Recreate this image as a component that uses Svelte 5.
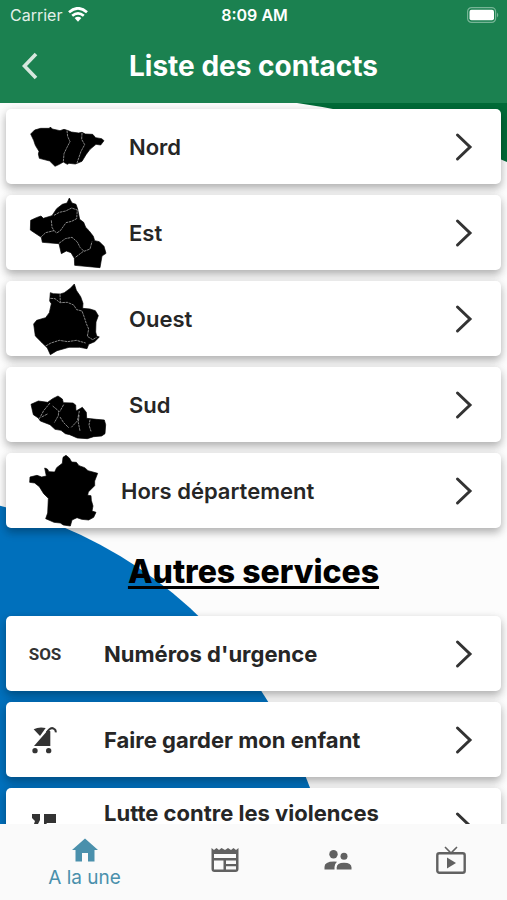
<script>
  const regions = [
    {
      name: 'Nord', box: '75 12 252 225',
      shape: 'M92 87 L104 75 L122 70 L148 70 L151 66 L157 72 L180 77 L192 73 L202 76 L214 81 L236 84 L246 82 L256 87 L278 88 L287 98 L305 101 L312 107 L302 120 L288 118 L270 133 L258 149 L246 169 L226 177 L207 175 L202 178 L190 171 L178 178 L165 184 L149 168 L118 160 L115 147 L117 139 L106 121 L101 106 Z',
      lines: 'M201 77 L203 94 L210 110 L201 127 L192 146 L190 170 M246 84 L245 103 L254 119 L243 139 L231 174'
    },
    {
      name: 'Est', box: '75 15 252 225',
      shape: 'M208 24 L216 39 L228 43 L233 57 L239 88 L251 97 L257 112 L267 122 L280 139 L284 152 L298 155 L312 169 L318 190 L306 198 L300 233 L224 226 L223 205 L213 188 L199 183 L184 191 L177 161 L127 157 L124 142 L103 128 L91 120 L92 91 L109 83 L123 78 L130 85 L156 77 L170 56 L187 43 L201 39 Z',
      lines: 'M154 91 L156 112 L162 122 L137 128 L124 140 M162 76 L178 67 L197 63 L215 54 L232 60 L230 86 L215 94 L198 98 L181 122 L170 129 L161 121 M177 160 L196 146 L216 142 L232 156 L240 172 L252 184 L270 177 L276 155 M250 184 L225 203'
    },
    {
      name: 'Ouest', box: '75 9 252 225',
      shape: 'M223 18 L229 37 L242 56 L249 76 L248 91 L270 93 L286 98 L295 113 L288 132 L287 162 L290 174 L298 177 L284 191 L266 199 L261 212 L239 208 L207 208 L171 218 L151 230 L142 210 L126 194 L106 174 L101 138 L110 127 L137 119 L148 104 L154 77 L149 69 L151 44 L160 47 L181 48 L193 44 L211 31 Z',
      lines: 'M151 61 L165 62 L180 74 L202 73 L221 81 L230 95 L246 99 L253 118 L259 137 L266 153 L262 175 L278 185 L290 178 M137 204 L153 195 L178 187 L203 191 L229 187 L257 195 M180 49 L181 72'
    },
    {
      name: 'Sud', box: '75 7 252 225',
      shape: 'M93 119 L115 109 L143 113 L158 102 L174 94 L187 103 L190 114 L219 115 L227 121 L228 139 L247 128 L259 143 L260 161 L289 164 L313 166 L317 180 L315 207 L305 214 L281 216 L262 222 L232 220 L209 210 L196 207 L183 197 L165 194 L150 180 L121 169 L115 160 L100 150 Z',
      lines: 'M150 115 L131 138 L117 164 M158 124 L176 139 L175 153 L163 174 M191 120 L179 141 M180 157 L191 174 L207 190 M238 139 L232 169 L214 188 M237 151 L235 174 L240 199 M270 165 L267 181 L273 200 M125 157 L144 147'
    },
    {
      name: 'Hors département', box: '75 10 228 225',
      shape: 'M198 17 L208 25 L215 37 L229 38 L237 48 L254 54 L264 63 L293 71 L284 94 L284 108 L265 127 L263 137 L273 138 L274 152 L279 169 L276 184 L288 188 L281 203 L266 211 L245 209 L231 204 L216 211 L211 229 L190 226 L181 220 L162 218 L137 207 L143 190 L145 146 L131 132 L118 111 L104 100 L89 98 L90 82 L111 77 L125 82 L139 79 L134 55 L142 58 L147 66 L164 67 L170 54 L187 41 L189 23 Z',
      lines: ''
    }
  ];

  const services = [
    { name: "Numéros d'urgence", icon: 'sos' },
    { name: 'Faire garder mon enfant', icon: 'stroller' },
    { name: 'Lutte contre les violences', icon: 'voices', tall: true }
  ];
</script>

{#snippet chevron()}
  <svg class="chevron" viewBox="0 0 20 30" aria-hidden="true">
    <path d="M3.500 3 L16 15 L3.500 27" fill="none" stroke="#333" stroke-width="3" stroke-linecap="round" />
  </svg>
{/snippet}

<div class="app">
  <header>
    <div class="status">
      <div class="carrier">
        <span>Carrier</span>
        <svg width="20" height="15" viewBox="0 0 20 15" aria-hidden="true">
          <g fill="none" stroke="#fff" stroke-width="2.700">
            <path d="M1 5.200 Q10 -2.600 19 5.200" />
            <path d="M4.200 8.800 Q10 3.900 15.800 8.800" />
          </g>
          <path d="M6.600 11.100 Q10 8.500 13.400 11.100 L10 14.700 Z" fill="#fff" />
        </svg>
      </div>
      <time>8:09 AM</time>
      <div class="battery">
        <svg width="33" height="16" viewBox="0 0 33 16" aria-hidden="true">
          <rect x="1.600" y="0.600" width="28" height="14.800" rx="4" fill="none" stroke="#76b596" stroke-width="1.200" />
          <rect x="3.500" y="2.700" width="24.500" height="10.600" rx="2" fill="#fff" />
          <path d="M31 5.500 Q33.500 8 31 10.500 Z" fill="#76b596" />
        </svg>
      </div>
    </div>
    <div class="bar">
      <button class="back" aria-label="Retour">
        <svg width="16" height="28" viewBox="0 0 16 28" aria-hidden="true">
          <path d="M14 2 L2.500 14 L14 26" fill="none" stroke="#d7e7de" stroke-width="3.600" />
        </svg>
      </button>
      <h1>Liste des contacts</h1>
    </div>
  </header>

  <div class="stage">
    <svg class="backdrop" viewBox="0 0 507 721" preserveAspectRatio="none" aria-hidden="true">
      <path d="M297 0 Q410 16 507 59 V0 Z" fill="#006b38" />
      <circle cx="-110" cy="835" r="446" fill="#0070bc" />
    </svg>
    <main>
      <div class="list">
        {#each regions as region}
          <button class="card">
            <svg class="map" style:width="{+region.box.split(' ')[2] / 3}px" viewBox={region.box} aria-hidden="true">
              <path d={region.shape} fill="#000" stroke="#000" stroke-width="2" stroke-linejoin="round" />
              <path d={region.lines} fill="none" stroke="#b4b4b4" stroke-width="2.200" stroke-dasharray="8 2" />
            </svg>
            <span class="label">{region.name}</span>
            {@render chevron()}
          </button>
        {/each}
      </div>

      <h2>Autres services</h2>

      <div class="list">
        {#each services as service}
          <button class="card service">
            <span class="icon">
              {#if service.icon === 'sos'}
                <span class="sos">SOS</span>
              {:else if service.icon === 'stroller'}
                <svg width="28" height="28" viewBox="96 108 84 84" aria-hidden="true">
                  <path d="M104 118 Q120 109 140 114 L123 138 Z" fill="#333" />
                  <path d="M105 168 L147 120 L154 124 V168 Z" fill="#333" />
                  <path d="M143 127 L150 119 Q159 110 167 118 Q171 121 170 127" fill="none" stroke="#333" stroke-width="6" />
                  <circle cx="108" cy="182" r="8" fill="#333" />
                  <circle cx="149" cy="182" r="8" fill="#333" />
                </svg>
              {:else}
                <svg width="28" height="28" viewBox="0 0 28 28" aria-hidden="true">
                  <path d="M1 2 H9 V8 L6 14 L3 12 L4 9 L1 6 Z M13 2 H25 V11 H16 L13 15 Z" fill="#333" />
                </svg>
              {/if}
            </span>
            <span class="label" class:tall={service.tall}>{service.name}</span>
            {@render chevron()}
          </button>
        {/each}
      </div>
    </main>
  </div>

  <nav>
    <a href="#une" class="active" aria-current="page">
      <svg width="26" height="24" viewBox="0 0 26 24" aria-hidden="true">
        <path d="M13 0.500 L26 12 H22.500 V23.500 H16 V15 H10 V23.500 H3.500 V12 H0 Z" fill="#4a90ac" />
      </svg>
      <span>A la une</span>
    </a>
    <a href="#journal" aria-label="Journal">
      <svg width="28" height="26" viewBox="0 0 28 26" aria-hidden="true">
        <path d="M0.500 1 L3 3 L5.500 1 L8 3 L10.500 1 L14 3 L17 1 L20 3 L22.500 1 L25 3 L27.500 1 V22 Q27.500 25 24.500 25 H3.500 Q0.500 25 0.500 22 Z" fill="#616161" />
        <path d="M3 7 H25 V11 H3 Z M3 13.500 H12.500 V22.500 H3 Z M15 13.500 H25 V17 H15 Z M15 19.300 H25 V22.500 H15 Z" fill="#fafafa" />
      </svg>
    </a>
    <a href="#contacts" aria-label="Contacts">
      <svg width="28" height="20" viewBox="0 0 28 20" aria-hidden="true">
        <g fill="#616161">
          <circle cx="9.500" cy="4.200" r="4.200" />
          <circle cx="20" cy="6.300" r="3.500" />
          <path d="M0.500 19.500 V17 Q0.500 11.500 10 11.500 L13 11.800 Q10.500 14 10.500 17 V19.500 Z" />
          <path d="M12.700 19.500 V17.500 Q12.700 12.800 20 12.800 Q27.500 12.800 27.500 17.500 V19.500 Z" />
        </g>
      </svg>
    </a>
    <a href="#tv" aria-label="Télévision">
      <svg width="30" height="28" viewBox="0 0 30 28" aria-hidden="true">
        <rect x="1.300" y="7.300" width="27.400" height="19.400" rx="2" fill="none" stroke="#616161" stroke-width="2.400" />
        <path d="M9 1 L15 7 L21 1" fill="none" stroke="#616161" stroke-width="1.600" />
        <path d="M11 11.500 L20 17 L11 22.500 Z" fill="#616161" />
      </svg>
    </a>
  </nav>
</div>

<style>
  :global(body) {
    margin: 0;
  }
  .app {
    display: flex;
    flex-direction: column;
    height: 100vh;
    overflow: hidden;
    background: #fcfcfc;
    font-family: Inter, 'Liberation Sans', sans-serif;
  }
  header {
    flex: none;
    background: #1b8150;
    color: #fff;
  }
  .status {
    display: grid;
    grid-template-columns: 1fr auto 1fr;
    align-items: center;
    height: 29px;
    padding: 0 8px 0 10px;
    font-size: 16px;
    line-height: 20px;
  }
  .carrier {
    display: flex;
    align-items: center;
    gap: 6px;
    color: #e3f0e9;
  }
  time {
    font-weight: 600;
  }
  .battery {
    display: flex;
    justify-content: flex-end;
  }
  .bar {
    display: grid;
    grid-template-columns: 60px 1fr 60px;
    align-items: center;
    height: 74px;
  }
  button {
    margin: 0;
    border: 0;
    font: inherit;
    color: inherit;
    cursor: pointer;
  }
  .back {
    display: flex;
    justify-content: center;
    padding: 8px;
    background: none;
  }
  h1 {
    margin: 0;
    font-size: 28px;
    font-weight: 700;
    line-height: 32px;
    text-align: center;
    white-space: nowrap;
  }
  .stage {
    position: relative;
    flex: 1;
    min-height: 0;
  }
  .backdrop {
    position: absolute;
    inset: 0;
    width: 100%;
    height: 100%;
  }
  main {
    position: relative;
    box-sizing: border-box;
    height: 100%;
    padding: 6px;
    overflow-y: auto;
    scrollbar-width: none;
  }
  .list {
    display: flex;
    flex-direction: column;
    gap: 11px;
  }
  .card {
    display: flex;
    align-items: center;
    width: 100%;
    height: 75px;
    padding: 0 27px 0 19px;
    border-radius: 5px;
    background: #fff;
    box-shadow: 0 5px 8px rgba(0, 0, 0, 0.22), 0 2px 10px rgba(0, 0, 0, 0.12);
    color: #262626;
    text-align: left;
  }
  .map {
    flex: none;
    height: 75px;
  }
  .label {
    flex: 1;
    padding-left: 20px;
    font-size: 22px;
    font-weight: 600;
    line-height: 26px;
  }
  .service .label {
    padding-left: 39px;
    font-weight: 700;
  }
  .tall {
    min-height: 52px;
  }
  .icon {
    display: flex;
    flex: none;
    justify-content: center;
    width: 40px;
  }
  .sos {
    font-family: Roboto, 'Liberation Sans', sans-serif;
    font-size: 17px;
    font-weight: 700;
    color: #333;
  }
  .chevron {
    flex: none;
    width: 20px;
    height: 30px;
  }
  h2 {
    margin: 0;
    padding: 24px 0;
    font-size: 32px;
    font-weight: 800;
    line-height: 40px;
    text-align: center;
    text-decoration: underline;
    text-decoration-thickness: 3px;
    text-underline-offset: 3px;
    text-decoration-skip-ink: none;
    color: #000;
  }
  nav {
    display: flex;
    flex: none;
    height: 76px;
    background: #fafafa;
  }
  nav a {
    display: flex;
    flex: 2;
    flex-direction: column;
    align-items: center;
    justify-content: center;
    gap: 4px;
    padding-bottom: 4px;
    text-decoration: none;
  }
  nav .active {
    flex: 3;
    padding: 4px 0 0;
    font-size: 19px;
    line-height: 24px;
    color: #4a90ac;
  }
</style>
